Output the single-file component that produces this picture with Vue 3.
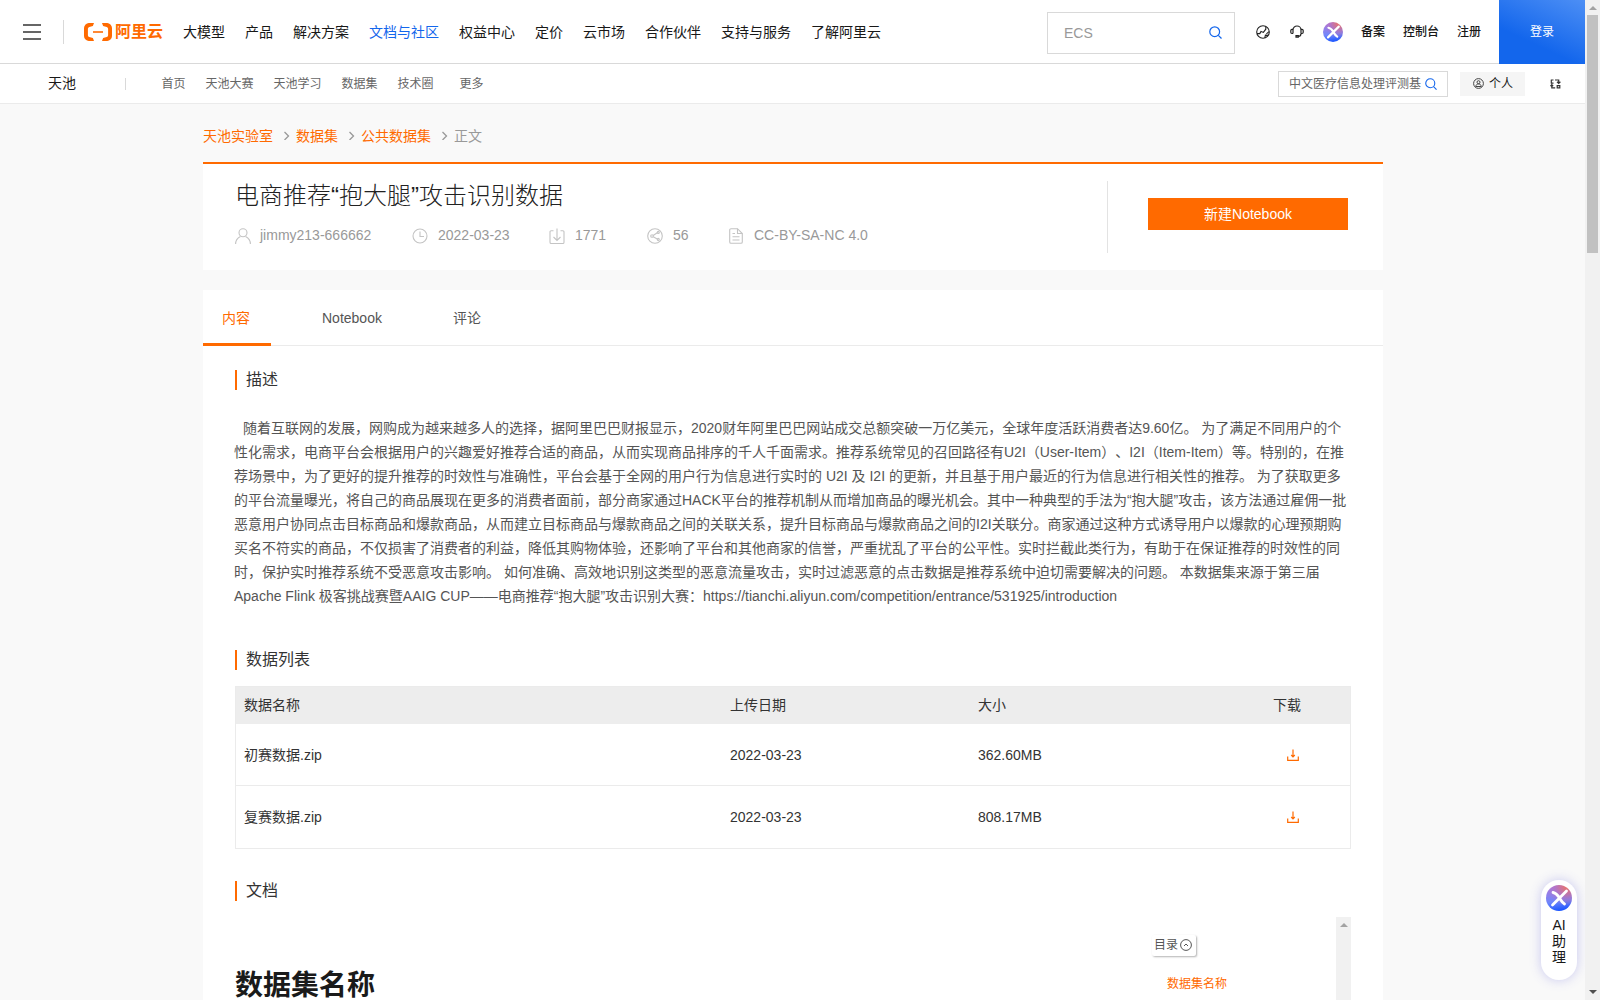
<template>
  <div class="window">
    <div class="page">
      <header class="topbar">
        <div class="burger"><i></i><i></i><i></i></div>
        <div class="topbar-line"></div>
        <div class="logo">
          <svg width="28" height="18" viewBox="0 0 28 18" fill="#ff6a00">
            <path d="M10 0H5.2A5 5 0 0 0 0 5v8a5 5 0 0 0 5.2 5H10l-1.1-3-3.6-.9a1.9 1.9 0 0 1-1.4-1.8V5.7a1.9 1.9 0 0 1 1.4-1.8L8.9 3z" />
            <path d="M18 0h4.8A5 5 0 0 1 28 5v8a5 5 0 0 1-5.2 5H18l1.1-3 3.6-.9a1.9 1.9 0 0 0 1.4-1.8V5.7a1.9 1.9 0 0 0-1.4-1.8L19.1 3z" />
            <path d="M9 8.2h10v1.6H9z" />
          </svg>
          <span>阿里云</span>
        </div>
        <nav class="main-nav">
          <a v-for="item in mainNav" :key="item" :class="{ active: item === '文档与社区' }">{{ item }}</a>
        </nav>
        <div class="search">
          <span>ECS</span>
          <svg width="13" height="13" viewBox="0 0 13 13" fill="none" stroke="#1366ec" stroke-width="1.2">
            <circle cx="5.7" cy="5.7" r="4.9" />
            <path d="M9.3 9.3l3.2 3.2" />
          </svg>
        </div>
        <div class="tools">
          <svg width="14" height="14" viewBox="0 0 14 14" fill="none" stroke="#222" stroke-width="1.1">
            <circle cx="7" cy="7" r="6.3" />
            <path d="M1 8.6h2.8L5 6.4l2.4 1L9.8 4.2V1.5M13 6.6l-2.6 2.2M8.8 12.8l.6-2.6 2.6.2" />
          </svg>
          <svg class="headset" width="14" height="13" viewBox="0 0 14 13" fill="none" stroke="#222" stroke-width="1.2">
            <path d="M3 8.5V5a4 4 0 0 1 8 0v3.5" />
            <path d="M3 4.3H2A1.3 1.3 0 0 0 .8 5.5v1.7A1.3 1.3 0 0 0 2 8.5h1M11 4.3h1a1.3 1.3 0 0 1 1.2 1.2v1.7A1.3 1.3 0 0 1 12 8.5h-1M11 8.5c0 2-1 3-2.8 3M6 10.7h2.3v1.5H6z" />
          </svg>
          <div class="ai-logo small">
            <svg viewBox="0 0 26 26"><path d="M7 7.5c3 .5 5 3 6.5 5.5s2.5 4.5 5 6M20.500 6L6.500 20" /></svg>
          </div>
        </div>
        <div class="account">
          <a>备案</a>
          <a>控制台</a>
          <a>注册</a>
        </div>
        <div class="login">登录</div>
      </header>

      <div class="subbar">
        <div class="brand">天池</div>
        <div class="subbar-line"></div>
        <nav class="sub-nav">
          <a v-for="item in subNav" :key="item">{{ item }}</a>
        </nav>
        <div class="sub-search">
          <span>中文医疗信息处理评测基</span>
          <svg width="12" height="12" viewBox="0 0 13 13" fill="none" stroke="#1366ec" stroke-width="1.2">
            <circle cx="5.7" cy="5.7" r="4.9" />
            <path d="M9.3 9.3l3.2 3.2" />
          </svg>
        </div>
        <div class="personal">
          <svg width="11" height="11" viewBox="0 0 11 11" fill="none" stroke="#444">
            <circle cx="5.5" cy="5.5" r="4.9" />
            <circle cx="5.5" cy="4.2" r="1.5" />
            <path d="M2.800 8.500c0-3.400 5.400-3.400 5.400 0z" />
          </svg>
          <span>个人</span>
        </div>
        <svg class="swap" width="11" height="10" viewBox="0 0 11 10" fill="none" stroke="#333" stroke-width="1.2">
          <path d="M.8 1h2.7M1.3 1v3.200M.8 4.200h2.700M5 1h3.700v3M7 2.800l1.700 1.600 1.700-1.600M1.800 5.800v3h3.400M.4 7.200l1.400-1.500 1.400 1.500" />
          <path d="M7.200 6.600h2.600v2.200H7.200z" />
        </svg>
      </div>

      <main class="content">
        <div class="breadcrumb">
          <template v-for="(crumb, i) in crumbs" :key="crumb">
            <svg v-if="i" width="23" height="10" viewBox="0 0 23 10" fill="none" stroke="#999" stroke-width="1.3">
              <path d="M11.500 2l4 4-4 4" />
            </svg>
            <a :class="{ current: i === crumbs.length - 1 }">{{ crumb }}</a>
          </template>
        </div>

        <section class="summary">
          <div class="summary-info">
            <h1>电商推荐“抱大腿”攻击识别数据</h1>
            <div class="meta">
              <span v-for="m in meta" :key="m.text" :style="{ width: m.width + 'px' }">
                <svg width="16" height="16" viewBox="0 0 16 16" fill="none" stroke="#c4c4c4" stroke-width="1.1">
                  <path v-for="d in m.icon" :key="d" :d="d" />
                </svg>
                {{ m.text }}
              </span>
            </div>
          </div>
          <div class="summary-action">
            <button>新建Notebook</button>
          </div>
        </section>

        <section class="detail">
          <div class="tabs">
            <a class="active">内容</a>
            <a>Notebook</a>
            <a>评论</a>
          </div>

          <h2 class="h-desc">描述</h2>
          <p class="desc">
            <span v-for="line in description" :key="line">{{ line }}</span>
          </p>

          <h2 class="h-list">数据列表</h2>
          <div class="table">
            <div class="row head">
              <span>数据名称</span><span>上传日期</span><span>大小</span><span>下载</span>
            </div>
            <div v-for="f in files" :key="f.name" class="row">
              <span>{{ f.name }}</span><span>{{ f.date }}</span><span>{{ f.size }}</span>
              <span class="download">
                <svg width="12" height="12" viewBox="0 0 12 12" fill="none" stroke="#ff6a00" stroke-width="1.2">
                  <path d="M.7 7.5v3.800h10.600V7.500" />
                  <path d="M6 .5v6.500M4.200 6l1.800 1.800L7.800 6" />
                </svg>
              </span>
            </div>
          </div>

          <h2 class="h-doc">文档</h2>
          <div class="doc">
            <h3>数据集名称</h3>
            <aside class="toc">
              <div class="toc-btn">
                目录
                <svg width="12" height="12" viewBox="0 0 12 12" fill="none" stroke="#555">
                  <circle cx="6" cy="6" r="5.4" />
                  <path d="M4 7l2-2 2 2" />
                </svg>
              </div>
              <a>数据集名称</a>
            </aside>
            <div class="doc-scroll"><i class="arrow-up"></i></div>
          </div>
        </section>
      </main>

      <div class="assistant">
        <div class="ai-logo">
          <svg viewBox="0 0 26 26"><path d="M7 7.5c3 .5 5 3 6.5 5.500s2.500 4.500 5 6M20.500 6L6.500 20" /></svg>
        </div>
        <span>AI</span><span>助</span><span>理</span>
      </div>
    </div>

    <div class="scrollbar">
      <i class="arrow-up"></i>
      <div class="thumb"></div>
      <i class="arrow-down"></i>
    </div>
  </div>
</template>

<script setup>
const mainNav = ['大模型', '产品', '解决方案', '文档与社区', '权益中心', '定价', '云市场', '合作伙伴', '支持与服务', '了解阿里云']
const subNav = ['首页', '天池大赛', '天池学习', '数据集', '技术圈', '更多']
const crumbs = ['天池实验室', '数据集', '公共数据集', '正文']

const meta = [
  { text: 'jimmy213-666662', width: 177, icon: ['M8 .8a4 4 0 1 1 0 8 4 4 0 1 1 0-8', 'M.6 16c0-3.500 2-6 4.800-7.500M15.400 16c0-3.500-2-6-4.800-7.500'] },
  { text: '2022-03-23', width: 137, icon: ['M8 1a7 7 0 1 1 0 14A7 7 0 1 1 8 1', 'M8 3.500v5h4'] },
  { text: '1771', width: 98, icon: ['M4.500 2.700H2.200A1.200 1.200 0 0 0 1 4v10.300a1.200 1.200 0 0 0 1.200 1.200h11.600a1.200 1.200 0 0 0 1.200-1.200V4a1.200 1.200 0 0 0-1.200-1.300h-2.300', 'M8 .5v12M4.500 9L8 12.500 11.500 9'] },
  { text: '56', width: 81, icon: ['M8 .7a7.300 7.300 0 1 1 0 14.600A7.300 7.300 0 1 1 8 .7', 'M5 6.700a1.300 1.300 0 1 1 0 2.600 1.300 1.300 0 1 1 0-2.600', 'M6.200 7.500l4-2.700M6.200 8.700l4 2.300', 'M11.300 3.400a1 1 0 1 1 0 2 1 1 0 1 1 0-2M11.300 10.400a1 1 0 1 1 0 2 1 1 0 1 1 0-2'] },
  { text: 'CC-BY-SA-NC 4.0', width: 200, icon: ['M9.500.7H3A1.300 1.300 0 0 0 1.700 2v12A1.300 1.300 0 0 0 3 15.300h10a1.300 1.300 0 0 0 1.300-1.300V5.500z', 'M9.500.7v4.800h4.800M4.500 5.500h2.500M4.500 8.800h7M4.500 12h7'] }
]

const description = [
  '随着互联网的发展，网购成为越来越多人的选择，据阿里巴巴财报显示，2020财年阿里巴巴网站成交总额突破一万亿美元，全球年度活跃消费者达9.60亿。 为了满足不同用户的个',
  '性化需求，电商平台会根据用户的兴趣爱好推荐合适的商品，从而实现商品排序的千人千面需求。推荐系统常见的召回路径有U2I（User-Item）、I2I（Item-Item）等。特别的，在推',
  '荐场景中，为了更好的提升推荐的时效性与准确性，平台会基于全网的用户行为信息进行实时的 U2I 及 I2I 的更新，并且基于用户最近的行为信息进行相关性的推荐。 为了获取更多',
  '的平台流量曝光，将自己的商品展现在更多的消费者面前，部分商家通过HACK平台的推荐机制从而增加商品的曝光机会。其中一种典型的手法为“抱大腿”攻击，该方法通过雇佣一批',
  '恶意用户协同点击目标商品和爆款商品，从而建立目标商品与爆款商品之间的关联关系，提升目标商品与爆款商品之间的I2I关联分。商家通过这种方式诱导用户以爆款的心理预期购',
  '买名不符实的商品，不仅损害了消费者的利益，降低其购物体验，还影响了平台和其他商家的信誉，严重扰乱了平台的公平性。实时拦截此类行为，有助于在保证推荐的时效性的同',
  '时，保护实时推荐系统不受恶意攻击影响。 如何准确、高效地识别这类型的恶意流量攻击，实时过滤恶意的点击数据是推荐系统中迫切需要解决的问题。 本数据集来源于第三届',
  'Apache Flink 极客挑战赛暨AAIG CUP——电商推荐“抱大腿”攻击识别大赛：https://tianchi.aliyun.com/competition/entrance/531925/introduction'
]

const files = [
  { name: '初赛数据.zip', date: '2022-03-23', size: '362.60MB' },
  { name: '复赛数据.zip', date: '2022-03-23', size: '808.17MB' }
]
</script>

<style>
body {
  margin: 0;
  overflow: hidden;
}
</style>

<style scoped>
.window {
  display: flex;
  width: 1600px;
  height: 1000px;
  overflow: hidden;
  font-family: 'Liberation Sans', 'Noto Sans CJK SC', sans-serif;
  font-size: 14px;
  color: #333;
  background: #f9f9f9;
  text-spacing-trim: space-all;
}

.window * {
  box-sizing: border-box;
}

.page {
  position: relative;
  width: 1585px;
  height: 1000px;
  overflow: hidden;
}

svg {
  display: block;
  flex: none;
}

h1, h2, h3, p {
  margin: 0;
  font-weight: normal;
}

/* top bar */
.topbar {
  display: flex;
  align-items: center;
  height: 64px;
  padding-left: 23px;
  background: #fff;
  border-bottom: 1px solid #d9d9d9;
  color: #181818;
  white-space: nowrap;
}

.burger {
  display: flex;
  flex-direction: column;
  gap: 5px;
  width: 18px;
}

.burger i {
  height: 2px;
  background: #666;
}

.topbar-line {
  width: 1px;
  height: 24px;
  margin: 0 20px 0 22px;
  background: #d9d9d9;
}

.logo {
  display: flex;
  align-items: center;
  gap: 3px;
  width: 99px;
  color: #ff6a00;
  font-size: 16px;
  line-height: 20px;
  font-weight: bold;
}

.main-nav {
  display: flex;
  gap: 20px;
  line-height: 20px;
}

.main-nav .active {
  color: #1366ec;
}

.search {
  display: flex;
  align-items: center;
  justify-content: space-between;
  width: 188px;
  height: 42px;
  margin: 2px 0 0 auto;
  padding: 0 12px 0 16px;
  border: 1px solid #d9d9d9;
  color: #999;
}

.tools {
  display: flex;
  align-items: center;
  margin-left: 21px;
}

.headset {
  margin: 0 19px 0 20px;
}

.account {
  display: flex;
  gap: 18px;
  margin: 0 18px 0 18px;
  font-size: 12px;
  line-height: 20px;
  font-weight: 500;
}

.login {
  width: 86px;
  height: 64px;
  align-self: flex-start;
  background: linear-gradient(25deg, #1366ec 35%, #4d8ff5);
  color: #fff;
  font-size: 12px;
  line-height: 64px;
  text-align: center;
}

.ai-logo {
  width: 26px;
  height: 26px;
  border-radius: 50%;
  background:
    radial-gradient(circle at 80% 8%, #e8736a, rgba(200, 110, 170, 0.5) 35%, transparent 60%),
    linear-gradient(170deg, #a57be0 15%, #6f86fb 60%, #1a55ff 92%);
}

.ai-logo.small {
  width: 20px;
  height: 20px;
}

.ai-logo path {
  fill: none;
  stroke: #fff;
  stroke-width: 2.8;
  stroke-linecap: round;
}

/* second bar */
.subbar {
  display: flex;
  align-items: center;
  height: 40px;
  padding-left: 48px;
  background: #fff;
  border-bottom: 1px solid #ebebeb;
  color: #666;
  font-size: 12px;
  line-height: 20px;
  white-space: nowrap;
}

.brand {
  width: 77px;
  padding-bottom: 1px;
  color: #181818;
  font-size: 14px;
}

.subbar-line {
  width: 1px;
  height: 12px;
  background: #d9d9d9;
}

.sub-nav {
  display: flex;
  gap: 20px;
  margin-left: 35.5px;
}

.sub-nav a:last-child {
  margin-left: 6px;
}

.sub-search {
  display: flex;
  align-items: center;
  gap: 4px;
  width: 170px;
  height: 26px;
  margin-left: auto;
  padding-left: 10px;
  border: 1px solid #d9d9d9;
}

.personal {
  display: flex;
  align-items: center;
  gap: 5px;
  width: 65px;
  height: 24px;
  margin-left: 12px;
  padding-left: 13px;
  background: #f5f5f5;
  color: #181818;
}

.swap {
  margin: 0 24px 0 25px;
}

/* content column */
.content {
  width: 1180px;
  margin-left: 203px;
}

.breadcrumb {
  display: flex;
  align-items: center;
  height: 58px;
  padding-top: 3px;
  color: #ff6a00;
}

.breadcrumb .current {
  color: #999;
}

.summary {
  display: flex;
  align-items: flex-start;
  height: 108px;
  padding: 17px 35px 0 32px;
  background: #fff;
  border-top: 2px solid #ff6a00;
}

.summary-info {
  flex: 1;
}

.summary h1 {
  height: 34px;
  color: #222;
  font-size: 24px;
  line-height: 30px;
  font-weight: 300;
}

.meta {
  display: flex;
  margin-top: 10px;
  color: #999;
  line-height: 20px;
}

.meta span {
  display: flex;
  gap: 10px;
}

.meta span:first-child {
  gap: 9px;
}

.meta svg {
  margin-top: 3px;
}

.summary-action {
  width: 241px;
  height: 72px;
  padding: 17px 0 0 40px;
  border-left: 1px solid #e3e3e3;
}

.summary-action button {
  width: 200px;
  height: 32px;
  padding: 0 0 2px;
  border: 0;
  background: #ff6a00;
  color: #fff;
  font: inherit;
}

.detail {
  height: 720px;
  margin-top: 20px;
  background: #fff;
}

.tabs {
  display: flex;
  gap: 31px;
  height: 56px;
  border-bottom: 1px solid #ebebeb;
  color: #555;
  line-height: 56px;
}

.tabs a {
  height: 56px;
  padding: 0 20px;
}

.tabs .active {
  padding: 0 21px 0 19px;
  border-bottom: 3px solid #ff6a00;
  color: #ff6a00;
}

h2 {
  height: 20px;
  margin-left: 32px;
  padding-left: 9px;
  border-left: 2px solid #ff6a00;
  color: #333;
  font-size: 16px;
  line-height: 19px;
}

.h-desc {
  margin-top: 24px;
}

.desc {
  margin: 26px 0 0 31px;
  color: #555;
  line-height: 24px;
}

.desc span {
  display: block;
  white-space: nowrap;
}

.desc span:first-child {
  padding-left: 9px;
}

.h-list {
  margin-top: 42px;
}

.table {
  width: 1116px;
  height: 163px;
  margin: 16px 0 0 32px;
  border: 1px solid #ebebeb;
}

.row {
  display: grid;
  grid-template-columns: 486px 248px 295px 1fr;
  align-items: center;
  height: 62px;
  padding-left: 8px;
  border-top: 1px solid #ebebeb;
  line-height: 20px;
}

.row.head {
  height: 37px;
  padding-bottom: 2px;
  border-top: 0;
  background: #ededed;
}

/* the first file row sits right under the grey header */
.row.head + .row {
  height: 61px;
  border-top: 0;
}

.download {
  padding-left: 14px;
}

.h-doc {
  margin-top: 32px;
}

.doc {
  display: flex;
  height: 99px;
  margin: 16px 32px 0;
}

.doc h3 {
  width: 917px;
  padding-top: 49px;
  color: #1a1a1a;
  font-size: 28px;
  line-height: 40px;
  font-weight: bold;
}

.toc {
  width: 184px;
  padding-top: 18px;
  color: #ff6a00;
  font-size: 12px;
  line-height: 18px;
}

.toc-btn {
  display: flex;
  align-items: center;
  gap: 2px;
  width: 44px;
  height: 21px;
  margin-bottom: 19px;
  padding: 0 0 1px 2px;
  border-radius: 2px;
  box-shadow: 1px 1px 2px rgba(0, 0, 0, 0.3);
  color: #555;
}

.toc a {
  padding-left: 15px;
}

.doc-scroll {
  width: 15px;
  padding-top: 6px;
  background: #f1f1f1;
}

/* floating assistant */
.assistant {
  position: absolute;
  left: 1541px;
  top: 880px;
  display: flex;
  flex-direction: column;
  align-items: center;
  width: 36px;
  height: 100px;
  padding-top: 5px;
  border-radius: 18px;
  background: #fff;
  box-shadow: 0 0 12px rgba(90, 90, 220, 0.3);
  color: #181818;
  line-height: 16px;
}

.assistant .ai-logo {
  margin-bottom: 6px;
}

/* scrollbars */
.scrollbar {
  display: flex;
  flex-direction: column;
  align-items: center;
  width: 15px;
  padding: 6px 0;
  background: #f1f1f1;
}

.arrow-up,
.arrow-down {
  display: block;
  width: 0;
  margin: 0 auto;
  border: 4px solid transparent;
}

.arrow-up {
  border-top: 0;
  border-bottom-color: #a3a3a3;
}

.arrow-down {
  margin-top: auto;
  border-bottom: 0;
  border-top-color: #505050;
}

.thumb {
  width: 11px;
  height: 238px;
  margin-top: 5px;
  background: #c1c1c1;
}
</style>
